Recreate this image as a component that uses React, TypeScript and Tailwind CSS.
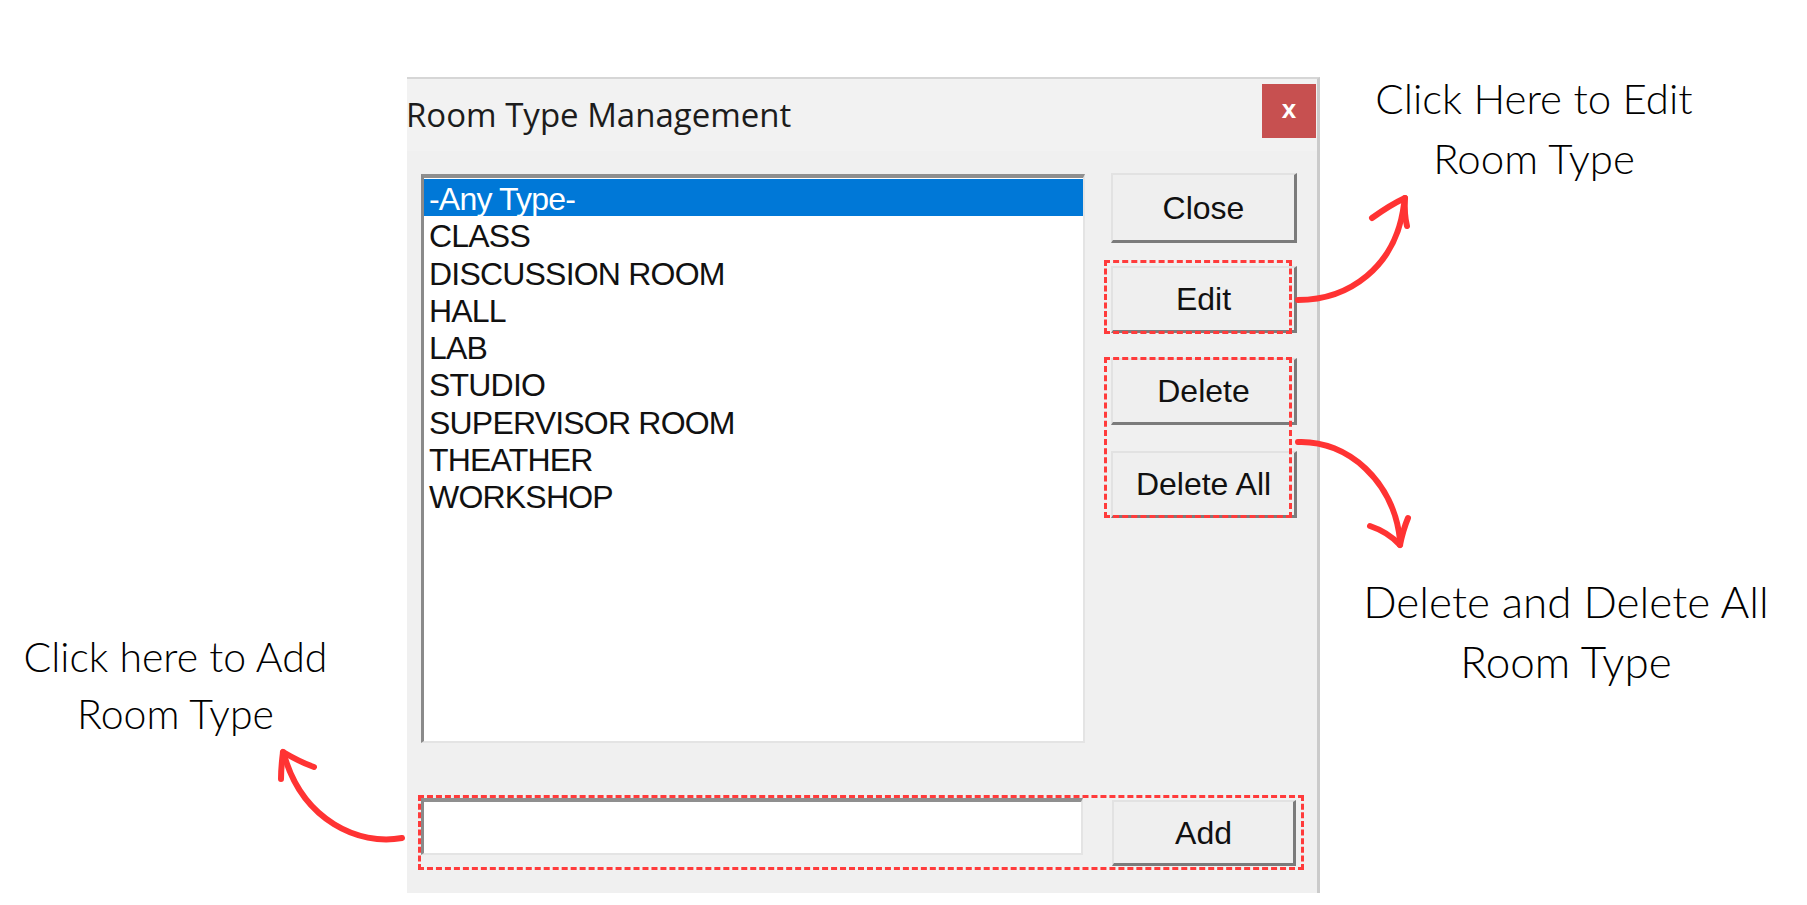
import React from "react";

const items = [
  "-Any Type-",
  "CLASS",
  "DISCUSSION ROOM",
  "HALL",
  "LAB",
  "STUDIO",
  "SUPERVISOR ROOM",
  "THEATHER",
  "WORKSHOP",
];

function WinButton({ label, className = "" }: { label: string; className?: string }) {
  return (
    <div
      className={`flex items-center justify-center bg-[#efefef] border-t-2 border-l-2 border-t-[#e2e2e2] border-l-[#e2e2e2] border-r-[3px] border-b-[3px] border-r-[#7b7b7b] border-b-[#7b7b7b] text-[32px] text-[#111] font-['Liberation_Sans',Arial,sans-serif] ${className}`}
    >
      {label}
    </div>
  );
}

function Dashed({ className }: { className: string }) {
  return <span className={`absolute border-[3px] border-dashed border-[#ff3b3b] pointer-events-none ${className}`} />;
}

function Arrows() {
  const red = "#ff3333";
  return (
    <svg className="absolute inset-0 pointer-events-none" width="1807" height="905" viewBox="0 0 1807 905" fill="none">
      <g stroke={red} strokeLinecap="round" strokeLinejoin="round">
        {/* edit */}
        <path d="M1298 300 C1348 300 1396 268 1404 204" strokeWidth="6" />
        <path d="M1372 218 Q1390 205 1405 198" strokeWidth="6" />
        <path d="M1405 198 Q1404 214 1407 226" strokeWidth="6" />
        {/* delete */}
        <path d="M1298 442 C1348 440 1394 482 1400 540" strokeWidth="6" />
        <path d="M1370 526 Q1388 532 1400 545" strokeWidth="6" />
        <path d="M1400 545 Q1403 530 1408 518" strokeWidth="6" />
        {/* add */}
        <path d="M402 838 C358 846 304 820 285 758" strokeWidth="6" />
        <path d="M283 752 Q281 768 281 779" strokeWidth="6" />
        <path d="M283 752 Q300 762 314 767" strokeWidth="6" />
      </g>
    </svg>
  );
}

export default function App() {
  return (
    <div className="relative w-[1807px] h-[905px] bg-white flex overflow-hidden font-['Lato',sans-serif] font-light">
      {/* left note */}
      <div className="w-[407px] shrink-0">
        <div className="w-[351px] mt-[628px] text-center text-[41px] leading-[57px] text-black">
          Click here to Add
          <br />
          Room Type
        </div>
      </div>

      {/* dialog */}
      <div className="w-[913px] h-[816px] mt-[77px] shrink-0 bg-[#f0f0f0] border-t-2 border-t-[#d6d6d6] border-r-[3px] border-r-[#cbcbcb] flex flex-col font-normal">
        <div className="h-[72px] bg-[#f2f2f2] flex items-start justify-between">
          <div className="mt-[13px] -ml-[1px] text-[33px] text-[#1c1c1c] font-['Open_Sans',sans-serif] leading-[45px]">
            Room Type Management
          </div>
          <div className="mt-[5px] mr-[1px] w-[54px] h-[54px] bg-[#c75050] flex items-center justify-center text-white text-[26px] font-bold font-['Liberation_Sans',Arial,sans-serif] leading-none pb-[4px]">
            x
          </div>
        </div>

        <div className="flex pl-[14px] pt-[23px]">
          <div className="w-[664px] h-[569px] bg-white border-t-[4px] border-l-[3px] border-t-[#8f8f8f] border-l-[#8a8a8a] border-r-2 border-b-2 border-r-[#e4e4e4] border-b-[#e4e4e4] pt-[1px] font-['Liberation_Sans',Arial,sans-serif] text-[32px] tracking-[-0.8px] leading-[37.3px]">
            {items.map((t, i) => (
              <div
                key={t}
                className={`pl-[5px] h-[37.3px] ${i === 0 ? "bg-[#0078d7] text-white" : "text-[#111]"}`}
              >
                <span className="inline-block translate-y-[2px]">{t}</span>
              </div>
            ))}
          </div>

          <div className="ml-[26px] w-[186px] flex flex-col -mt-[1px]">
            <WinButton label="Close" className="h-[70px]" />
            <div className="relative mt-[23px]">
              <WinButton label="Edit" className="h-[67px]" />
              <Dashed className="-left-[7px] -top-[6px] right-[5px] -bottom-[1px]" />
            </div>
            <div className="relative mt-[25px]">
              <WinButton label="Delete" className="h-[67px]" />
              <WinButton label="Delete All" className="h-[67px] mt-[26px]" />
              <Dashed className="-left-[7px] -top-[1px] right-[5px] bottom-0" />
            </div>
          </div>
        </div>

        <div className="relative flex items-start ml-[14px] mt-[55px] w-[882px]">
          <div className="w-[662px] h-[57px] bg-white border-t-[4px] border-l-[3px] border-t-[#8f8f8f] border-l-[#8a8a8a] border-r-2 border-b-2 border-r-[#e4e4e4] border-b-[#e4e4e4]" />
          <WinButton label="Add" className="ml-[29px] mt-[2px] w-[184px] h-[66px]" />
          <Dashed className="-left-[3px] -top-[3px] -right-[1px] -bottom-[4px]" />
        </div>
      </div>

      {/* right notes */}
      <div className="flex-1 flex flex-col">
        <div className="w-[428px] mt-[68px] text-center text-[42px] leading-[60px] text-black">
          Click Here to Edit
          <br />
          Room Type
        </div>
        <div className="w-[492px] mt-[383px] text-center text-[44px] leading-[60px] text-black">
          Delete and Delete All
          <br />
          Room Type
        </div>
      </div>

      <Arrows />
    </div>
  );
}
